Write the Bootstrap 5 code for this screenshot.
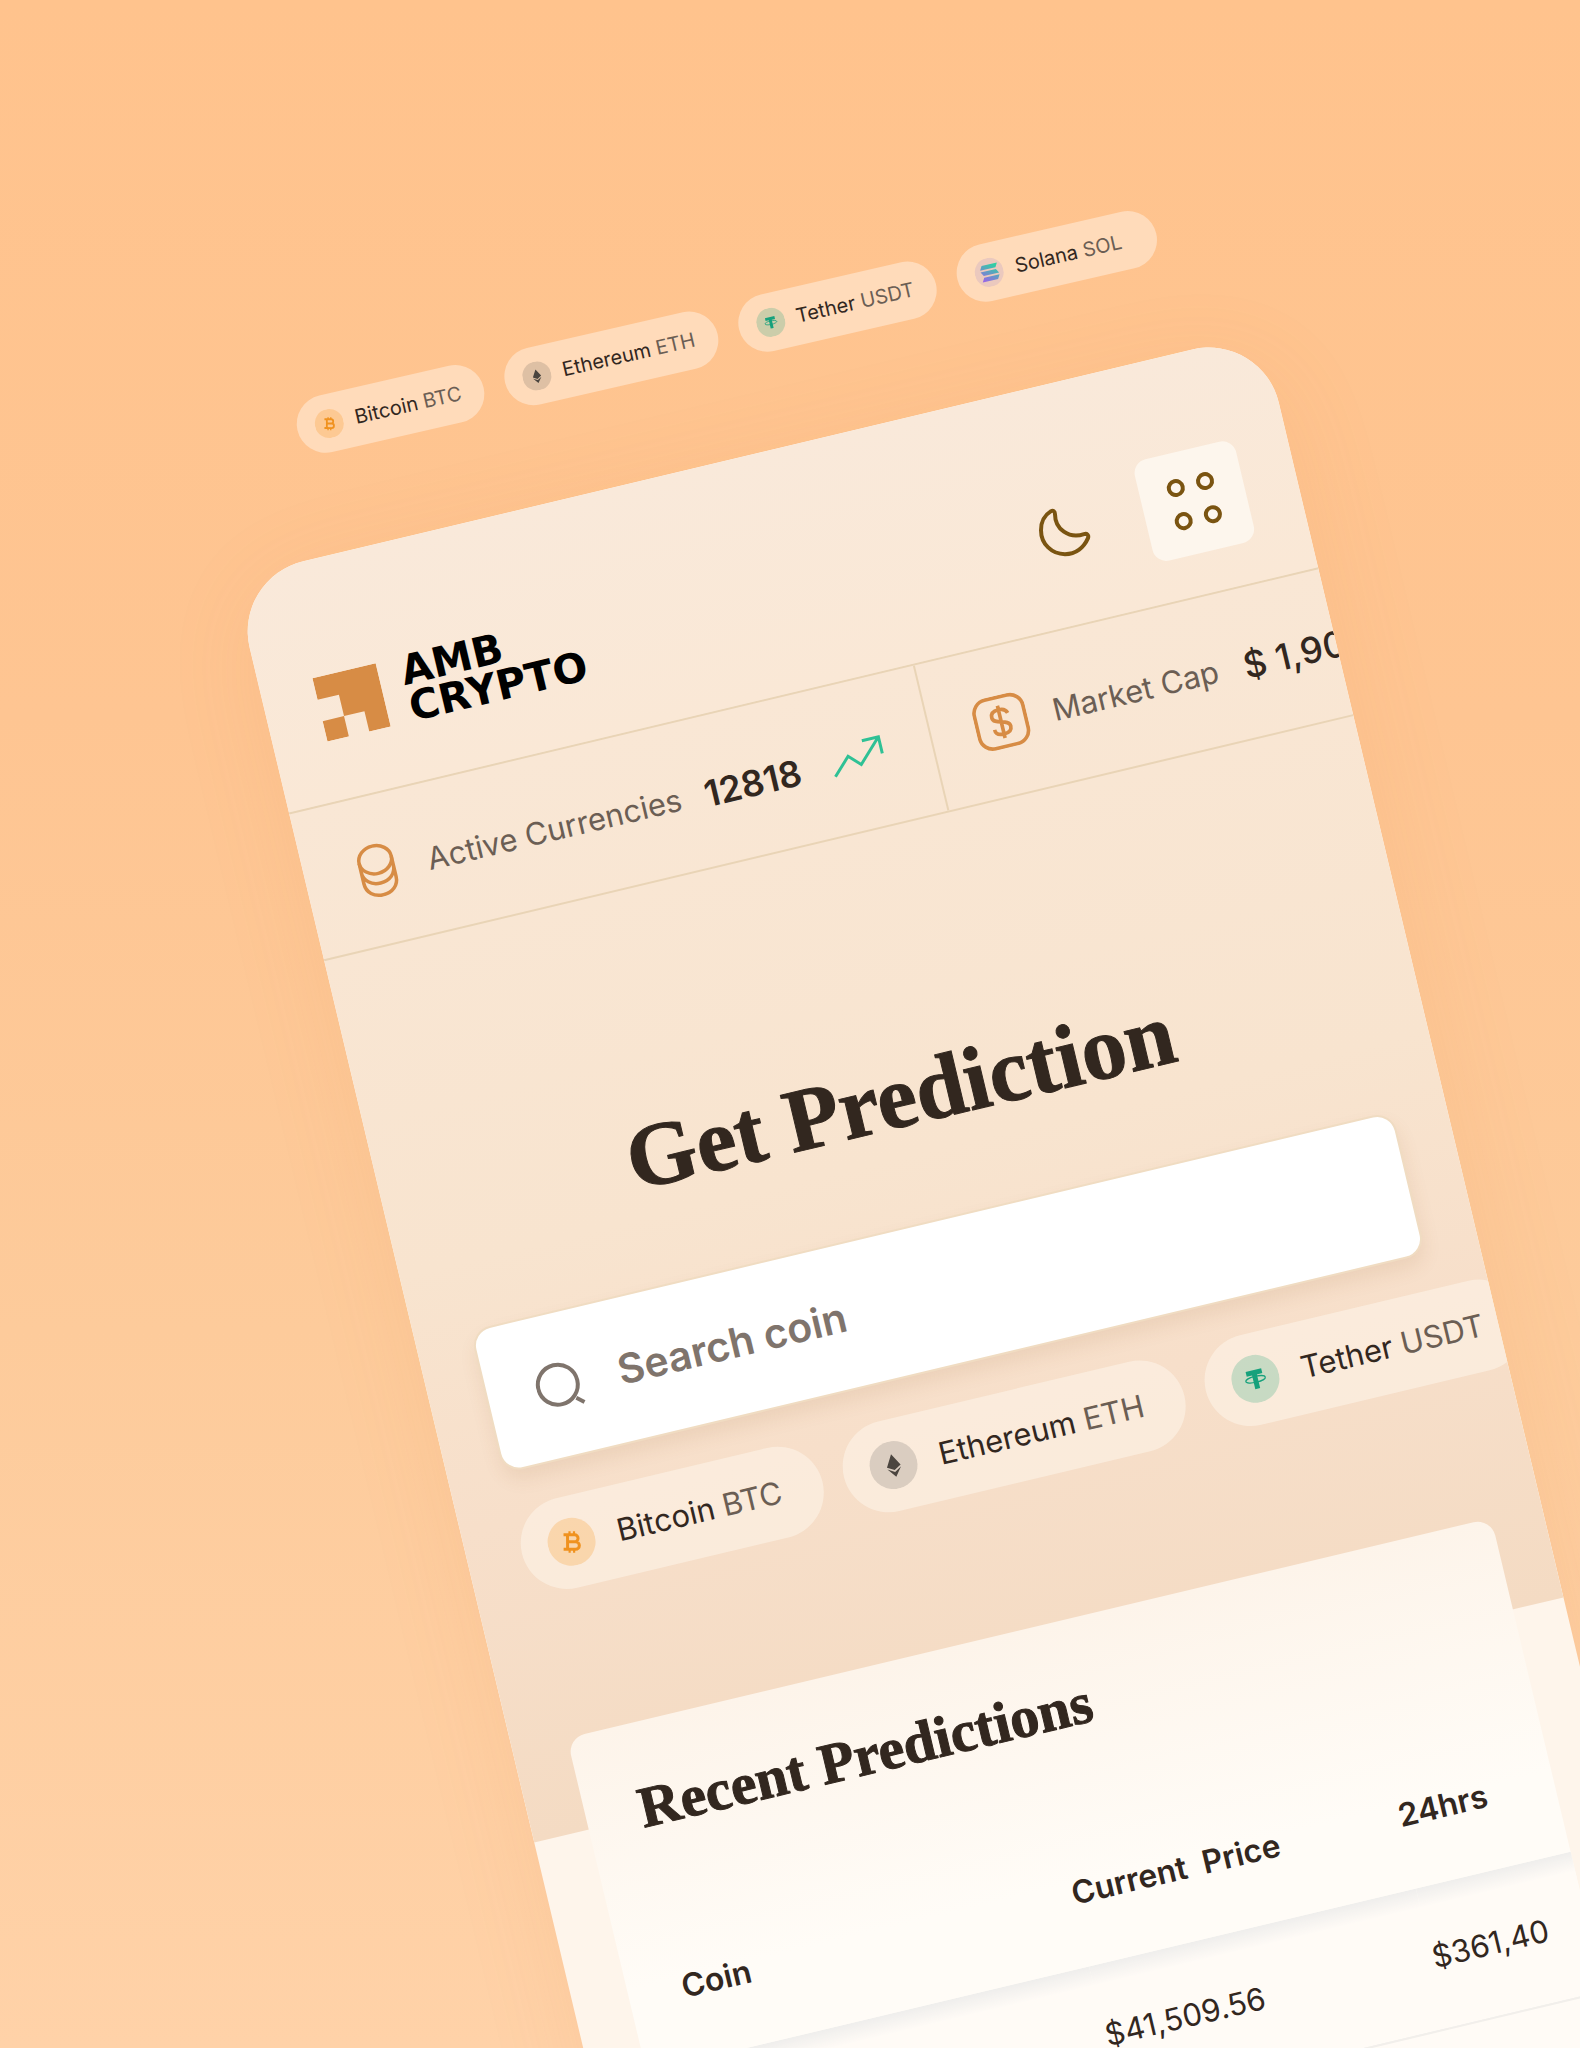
<!DOCTYPE html>
<html lang="en">
<head>
<meta charset="utf-8">
<meta name="viewport" content="width=device-width, initial-scale=1">
<title>AMB Crypto – Get Prediction</title>
<link href="https://cdn.jsdelivr.net/npm/bootstrap@5.3.0/dist/css/bootstrap.min.css" rel="stylesheet">
<style>
  :root { --ink: #32271f; --ink-soft: #6b5e54; --rule: #e9d4b6; --brand: #d78c45; --olive: #7a5411; }
  body { font-family: Inter, "Liberation Sans", sans-serif; color: var(--ink); background: #ffc48e; }
  .stage { height: 100vh; padding-top: 402px; background: linear-gradient(180deg, #ffc38d 0%, #fec592 35%, #fdcb9b 65%, #ffd2a8 100%); }
  .serif { font-family: "Liberation Serif", serif; font-weight: 700; line-height: 1; -webkit-text-stroke: 1px currentColor; }

  .coin-strip { margin-left: 291px; gap: 22px; transform: rotate(-12.9deg); transform-origin: 0 0; }
  .coin-pill { display: flex; align-items: center; flex: none; border: 0; border-radius: 60px; color: var(--ink); white-space: nowrap;
    height: 92px; padding: 0 42px 0 27px; gap: 23px; font-size: 31px; background: rgba(255, 250, 242, .45); }
  .coin-pill svg { width: 48px; height: 48px; flex: none; }
  .coin-pill .ticker { color: var(--ink-soft); }
  .coin-strip .coin-pill { height: 58px; padding: 0 23px 0 18px; gap: 12px; font-size: 20px; background: #ffdbba; }
  .coin-strip .coin-pill svg { width: 29px; height: 29px; }
  .coin-strip .coin-pill.roomy { padding-right: 36px; }

  .device { width: 100%; max-width: 1058px; margin: 118px 0 0 233px; border-radius: 72px 72px 0 0; overflow: hidden;
    transform: rotate(-13.4deg); transform-origin: 0 0; background: #fef5eb; box-shadow: 0 20px 90px rgba(222, 140, 70, .12); }
  .device-head { height: 241px; padding: 55px 53px 0 54px; background: linear-gradient(180deg, #f9e9da, #fae8d6); }
  .brand-mark { width: 65px; height: 65px; }
  .brand-name { font: 700 41px/37px "DejaVu Sans", sans-serif; color: #000; margin-left: 23px; padding-top: 2px; }
  .head-btn { border: 0; background: transparent; padding: 0; color: var(--olive); }
  .moon-btn { margin-right: 50px; }
  .menu-btn { width: 104px; height: 104px; border-radius: 14px; background: #fdf6ed; }

  .hero { background: linear-gradient(180deg, #f9e7d5 0%, #f8e4cf 45%, #f7dfca 70%, #f4dbc3 100%); height: 1059px; }
  .stats { height: 153px; border-top: 2px solid var(--rule); border-bottom: 2px solid var(--rule); font-size: 31px; color: var(--ink-soft); white-space: nowrap; }
  .stat-item { flex: none; }
  .stat-item:first-child { width: 643px; padding-left: 54px; gap: 24px; border-right: 2px solid var(--rule); }
  .stat-item:last-child { padding-left: 44px; gap: 26px; }
  .stat-value { font-size: 36px; font-weight: 600; color: var(--ink); }
  .stat-item:last-child .stat-value { font-weight: 500; }
  .hero-title { font-size: 90px; padding-top: 220px; margin: 0; }
  .search-box { height: 147px; margin: 83px 54px 0 56px; padding: 0 49px; gap: 34px; background: #fff; border: 2px solid #f0dcc2; border-radius: 20px; box-shadow: 0 10px 18px rgba(150, 90, 40, .1); }
  .search-box input { border: 0; outline: 0; background: transparent; font-size: 41px; font-weight: 600; color: var(--ink); min-width: 0; }
  .search-box input::placeholder { color: #7f746c; opacity: 1; }
  .pill-row { padding: 36px 0 0 55px; gap: 22px; }

  .pred-card { margin: -94px 52px 0 56px; border-radius: 18px 18px 0 0; background: linear-gradient(180deg, #fdf4ea 0, #fffcf7 260px); position: relative; min-height: 700px; }
  .pred-card h2 { font-size: 58px; padding: 57px 0 0 54px; margin: 0; }
  .pred-table { table-layout: fixed; margin: 0; font-size: 31px; white-space: nowrap; --bs-table-bg: transparent; --bs-table-color: var(--ink); }
  .pred-table th, .pred-table td { padding: 0; border: 0; vertical-align: middle; overflow: visible; }
  .pred-table th:first-child, .pred-table td:first-child { padding-left: 54px; }
  .pred-table thead th { height: 228px; padding-top: 79px; font-weight: 600; font-size: 32px; }
  .pred-table tbody td { height: 144px; background: #fffbf6; border-bottom: 2px solid #f2efeb; }
  .pred-table tbody tr:first-child td { background: linear-gradient(180deg, #efeeec 0, #fffbf6 20px); }
  .col-coin { width: 455px; } .col-price { width: 336px; }
</style>
</head>
<body>
<svg width="0" height="0" class="position-absolute" aria-hidden="true">
  <defs><linearGradient id="solg" gradientUnits="userSpaceOnUse" x1="12" y1="38" x2="32" y2="11"><stop offset="0" stop-color="#9a62e8"/><stop offset="1" stop-color="#2fcfa4"/></linearGradient></defs>
  <symbol id="ic-btc" viewBox="0 0 48 48"><circle cx="24" cy="24" r="24" fill="#f7931a" fill-opacity=".24"/><g transform="rotate(13 24 24)" fill="none" stroke="#f0921f" stroke-width="3"><path d="M16 17h11a3.500 3.500 0 0 1 0 7h-6h7a3.700 3.700 0 0 1 0 7.500H16M20 17v14.500"/><path d="M22 13.500v3M26.500 13.500v3M22 31v4M26.500 31v4" stroke-width="2.200"/></g></symbol>
  <symbol id="ic-eth" viewBox="0 0 48 48"><circle cx="24" cy="24" r="24" fill="#3c3c3d" fill-opacity=".17"/><path fill="#4b453f" d="M24 13l7 12-7 4-7-4zM17 27l7 4 7-4-7 9z"/></symbol>
  <symbol id="ic-usdt" viewBox="0 0 48 48"><circle cx="24" cy="24" r="24" fill="#26a17b" fill-opacity=".24"/><path fill="#16a17c" d="M16 15h16v5h-5.500v14h-5V20H16z"/><ellipse cx="24" cy="24.500" rx="10" ry="3" fill="none" stroke="#16a17c" stroke-width="1.200"/></symbol>
  <symbol id="ic-sol" viewBox="0 0 48 48"><circle cx="24" cy="24" r="24" fill="#9a80d0" fill-opacity=".2"/><path fill="url(#solg)" d="M14 11h26l-4 7H10zM10 21h26l4 7H14zM14 31h26l-4 7H10z"/></symbol>
</svg>

<main class="stage overflow-hidden">
  <div class="coin-strip d-flex">
    <button type="button" class="coin-pill"><svg><use href="#ic-btc"/></svg><span>Bitcoin <span class="ticker">BTC</span></span></button>
    <button type="button" class="coin-pill"><svg><use href="#ic-eth"/></svg><span>Ethereum <span class="ticker">ETH</span></span></button>
    <button type="button" class="coin-pill"><svg><use href="#ic-usdt"/></svg><span>Tether <span class="ticker">USDT</span></span></button>
    <button type="button" class="coin-pill roomy"><svg><use href="#ic-sol"/></svg><span>Solana <span class="ticker">SOL</span></span></button>
  </div>

  <div class="device">
    <header class="device-head d-flex align-items-center">
      <a href="#" class="d-flex align-items-center text-decoration-none me-auto" aria-label="AMB Crypto">
        <svg class="brand-mark" viewBox="0 0 65 65" fill="#d78c45"><path d="M0 0h65v65H43V44H22V22H0zM0 44h22v21H0z"/></svg>
        <span class="brand-name">AMB<br>CRYPTO</span>
      </a>
      <button type="button" class="head-btn moon-btn" aria-label="Dark mode">
        <svg width="64" height="64" viewBox="0 0 64 64" fill="none" stroke="currentColor" stroke-width="4" stroke-linejoin="round"><path transform="rotate(13.400 32 32)" d="M19 11C11 16 9 22 9 30c0 14 11 24 24 24 11 0 19-7 23-16 1-3-1-5-4-4-15 5-29-5-29-20 0-3-2-4-4-3z"/></svg>
      </button>
      <button type="button" class="head-btn menu-btn" aria-label="Menu">
        <svg width="64" height="64" viewBox="0 0 64 64" fill="none" stroke="currentColor" stroke-width="4"><circle cx="17" cy="15" r="7"/><circle cx="47" cy="15" r="7"/><circle cx="17" cy="49" r="7"/><circle cx="47" cy="49" r="7"/></svg>
      </button>
    </header>

    <section class="hero">
      <div class="stats d-flex overflow-hidden">
        <div class="stat-item d-flex align-items-center">
          <svg width="38" height="54" viewBox="0 0 38 54" fill="none" stroke="#d78c45" stroke-width="3.500"><ellipse cx="19" cy="16" rx="16.500" ry="14"/><path d="M2.500 16v21c0 9 7 15 16.500 15s16.500-6 16.500-15V16M2.500 25c0 9 7 15 16.500 15s16.500-6 16.500-15"/></svg>
          <span class="ps-2 pt-1">Active Currencies</span>
          <span class="stat-value pt-1">12818</span>
          <svg width="64" height="40" viewBox="0 0 64 40" fill="none" stroke="#2fc195" stroke-width="3"><path d="M8 35l17-17 11 11 23-23M42 6h17v17"/></svg>
        </div>
        <div class="stat-item d-flex align-items-center">
          <svg width="54" height="54" viewBox="0 0 52 52" fill="none" stroke="#d78c45" stroke-width="3.500"><rect x="2" y="2" width="48" height="48" rx="13"/><path d="M34 19c-1-4-4-5-8-5-5 0-8 2-8 6 0 8 16 4 16 12 0 4-3 6-8 6s-8-2-8-6M26 10v32"/></svg>
          <span class="pt-1">Market Cap</span>
          <span class="stat-value pt-1">$ 1,90</span>
        </div>
      </div>
      <h1 class="serif hero-title text-center">Get Prediction</h1>
      <form class="search-box d-flex align-items-center">
        <svg class="flex-shrink-0" width="48" height="50" viewBox="0 0 48 50" fill="none" stroke="#7f746c" stroke-width="4"><circle cx="22" cy="24" r="20"/><path d="M37 41l7 6"/></svg>
        <label class="visually-hidden" for="coin-search">Search coin</label>
        <input id="coin-search" class="flex-grow-1" type="text" placeholder="Search coin">
      </form>
      <div class="pill-row d-flex">
        <button type="button" class="coin-pill"><svg><use href="#ic-btc"/></svg><span>Bitcoin <span class="ticker">BTC</span></span></button>
        <button type="button" class="coin-pill"><svg><use href="#ic-eth"/></svg><span>Ethereum <span class="ticker">ETH</span></span></button>
        <button type="button" class="coin-pill"><svg><use href="#ic-usdt"/></svg><span>Tether <span class="ticker">USDT</span></span></button>
      </div>
    </section>

    <section class="pred-card">
      <h2 class="serif">Recent Predictions</h2>
      <table class="table pred-table">
        <colgroup><col class="col-coin"><col class="col-price"><col></colgroup>
        <thead><tr><th scope="col">Coin</th><th scope="col">Current&nbsp; Price</th><th scope="col">24hrs</th></tr></thead>
        <tbody>
          <tr><td></td><td>$41,509.56</td><td>$361,40</td></tr>
          <tr><td></td><td></td><td></td></tr>
        </tbody>
      </table>
    </section>
  </div>
</main>
<script src="https://cdn.jsdelivr.net/npm/bootstrap@5.3.0/dist/js/bootstrap.bundle.min.js"></script>
</body>
</html>
